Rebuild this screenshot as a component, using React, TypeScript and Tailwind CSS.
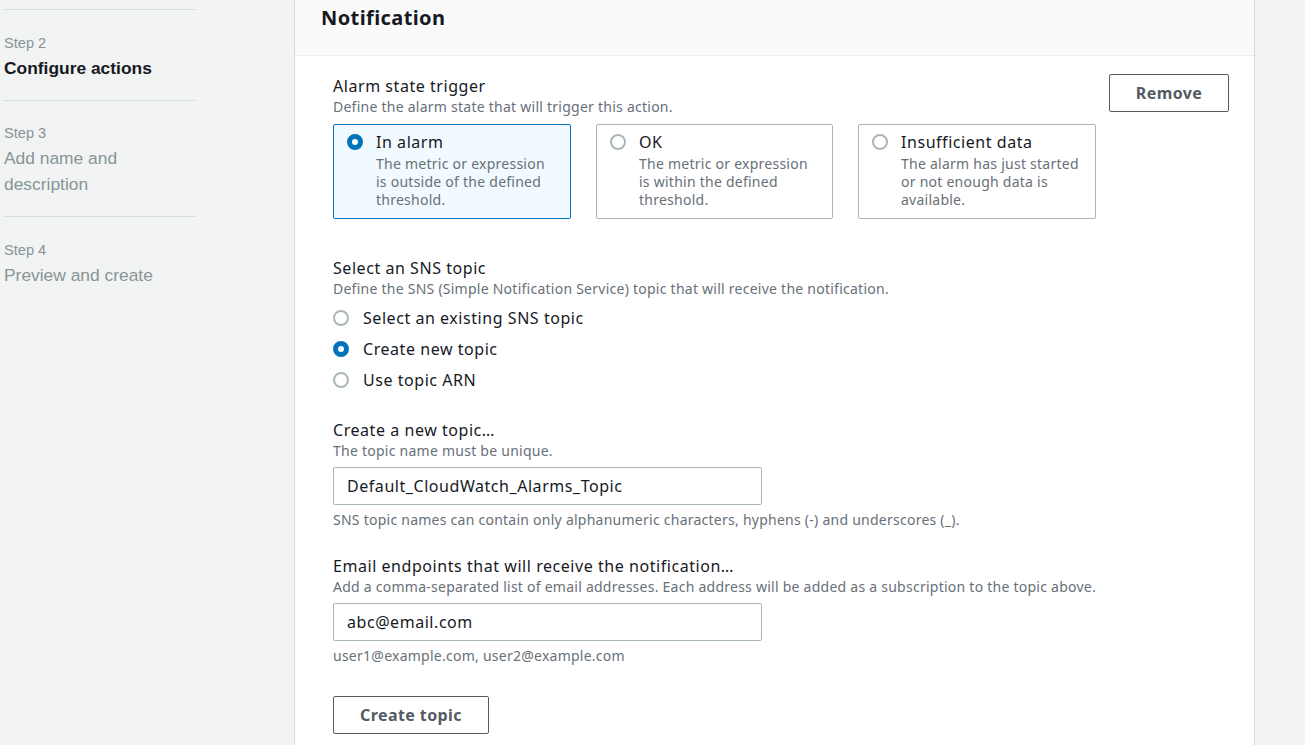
import React from "react";

const F = { fontFamily: '"Noto Sans", "Open Sans", sans-serif' };
const L = "text-[16px] tracking-[0.55px]";
const S = "text-[14px] tracking-[0.25px]";

function Radio({ on }: { on?: boolean }) {
  return on ? (
    <div className="w-4 h-4 rounded-full border-[5px] border-[#0073bb] bg-white shrink-0" />
  ) : (
    <div className="w-4 h-4 rounded-full border-2 border-[#aab7b8] bg-white shrink-0" />
  );
}

function Card({ on, narrow, title, lines }: { on?: boolean; narrow?: boolean; title: string; lines: string[] }) {
  return (
    <div
      className={`${narrow ? "w-[237px]" : "w-[238px]"} h-[95px] rounded-[2px] border pt-[6px] pl-[13px] pr-2 flex gap-[13px] ${
        on ? "border-[#0073bb] bg-[#f1faff]" : "border-[#aab7b8] bg-white"
      }`}
    >
      <div className="h-[22px] flex items-center">
        <Radio on={on} />
      </div>
      <div>
        <div className={`${L} leading-[22px] text-[#16191f]`}>{title}</div>
        <div className={`mt-[2px] ${S} leading-[18px] text-[#687078]`}>
          {lines.map((l) => (
            <div key={l}>{l}</div>
          ))}
        </div>
      </div>
    </div>
  );
}

function Step({ n, title, active }: { n: number; title: React.ReactNode; active?: boolean }) {
  return (
    <div>
      <div className="text-[14.6px] leading-[20px] text-[#879596] mb-[2px]">Step {n}</div>
      <div
        className={`text-[17.4px] leading-[26px] ${active ? "font-bold text-[#16191f]" : "text-[#879596]"}`}
      >
        {title}
      </div>
    </div>
  );
}

export default function App() {
  return (
    <div className="w-[1305px] h-[745px] overflow-hidden flex bg-[#f2f3f3]">
      <aside
        className="w-[295px] shrink-0 border-r border-[#d5dbdb] bg-[#f2f3f3] pl-[4px] pt-[9px]"
        style={{ fontFamily: '"Liberation Sans", Arial, sans-serif' }}
      >
        <div className="w-[191px]">
          <div className="h-px bg-[#d5dbdb]" />
          <div className="pt-[23px] pb-[19px]">
            <Step n={2} title="Configure actions" active />
          </div>
          <div className="h-px bg-[#d5dbdb]" />
          <div className="pt-[22px] pb-[19px]">
            <Step
              n={3}
              title={
                <>
                  Add name and
                  <br />
                  description
                </>
              }
            />
          </div>
          <div className="h-px bg-[#d5dbdb]" />
          <div className="pt-[23px]">
            <Step n={4} title="Preview and create" />
          </div>
        </div>
      </aside>

      <main className="w-[960px] shrink-0 bg-white border-r border-[#d5dbdb]" style={F}>
        <div className="h-[56px] bg-[#fafafa] border-b border-[#eaeded] pl-[26px] pt-[4px]">
          <h2 className="text-[20px] tracking-[0.4px] leading-[28px] font-bold text-[#16191f]">Notification</h2>
        </div>

        <div className="pl-[38px] pr-[25px] pt-[18px]">
          <div className="flex justify-between items-start">
            <div>
              <div className={`${L} leading-[22px] text-[#16191f] mt-px`}>Alarm state trigger</div>
              <div className={`${S} leading-[20px] text-[#687078]`}>
                Define the alarm state that will trigger this action.
              </div>
              <div className="mt-[7px] flex gap-[25px]">
                <Card
                  on
                  title="In alarm"
                  lines={["The metric or expression", "is outside of the defined", "threshold."]}
                />
                <Card
                  narrow
                  title="OK"
                  lines={["The metric or expression", "is within the defined", "threshold."]}
                />
                <Card
                  title="Insufficient data"
                  lines={["The alarm has just started", "or not enough data is", "available."]}
                />
              </div>
            </div>
            <button className="w-[120px] h-[38px] border border-[#545b64] rounded-[2px] bg-white text-[16px] tracking-[0.4px] font-bold text-[#545b64]">
              Remove
            </button>
          </div>

          <div className={`mt-[38px] ${L} leading-[22px] text-[#16191f]`}>Select an SNS topic</div>
          <div className={`${S} leading-[20px] text-[#687078]`}>
            Define the SNS (Simple Notification Service) topic that will receive the notification.
          </div>
          <div className="mt-[3px]">
            {[
              ["Select an existing SNS topic", false],
              ["Create new topic", true],
              ["Use topic ARN", false],
            ].map(([l, on]) => (
              <div key={l as string} className="h-[31px] flex items-center gap-[14px]">
                <Radio on={on as boolean} />
                <span className={`${L} text-[#16191f]`}>{l as string}</span>
              </div>
            ))}
          </div>

          <div className={`mt-[24px] ${L} leading-[22px] text-[#16191f]`}>Create a new topic…</div>
          <div className={`${S} leading-[20px] text-[#687078]`}>The topic name must be unique.</div>
          <div className={`mt-[6px] w-[429px] h-[38px] border border-[#aab7b8] rounded-[2px] flex items-center pl-[13px] ${L} text-[#16191f]`}>
            Default_CloudWatch_Alarms_Topic
          </div>
          <div className={`mt-[5px] ${S} leading-[20px] text-[#687078]`}>
            SNS topic names can contain only alphanumeric characters, hyphens (-) and underscores (_).
          </div>

          <div className={`mt-[25px] ${L} leading-[22px] text-[#16191f]`}>
            Email endpoints that will receive the notification…
          </div>
          <div className={`${S} leading-[20px] text-[#687078]`}>
            Add a comma-separated list of email addresses. Each address will be added as a subscription to the topic above.
          </div>
          <div className={`mt-[6px] w-[429px] h-[38px] border border-[#aab7b8] rounded-[2px] flex items-center pl-[13px] ${L} text-[#16191f]`}>
            abc@email.com
          </div>
          <div className={`mt-[5px] ${S} leading-[20px] text-[#687078]`}>
            user1@example.com, user2@example.com
          </div>

          <button className="mt-[30px] w-[156px] h-[38px] border border-[#545b64] rounded-[2px] bg-white text-[16px] tracking-[0.4px] font-bold text-[#545b64]">
            Create topic
          </button>
        </div>
      </main>
      <div className="flex-1 bg-[#f2f3f3]" />
    </div>
  );
}
